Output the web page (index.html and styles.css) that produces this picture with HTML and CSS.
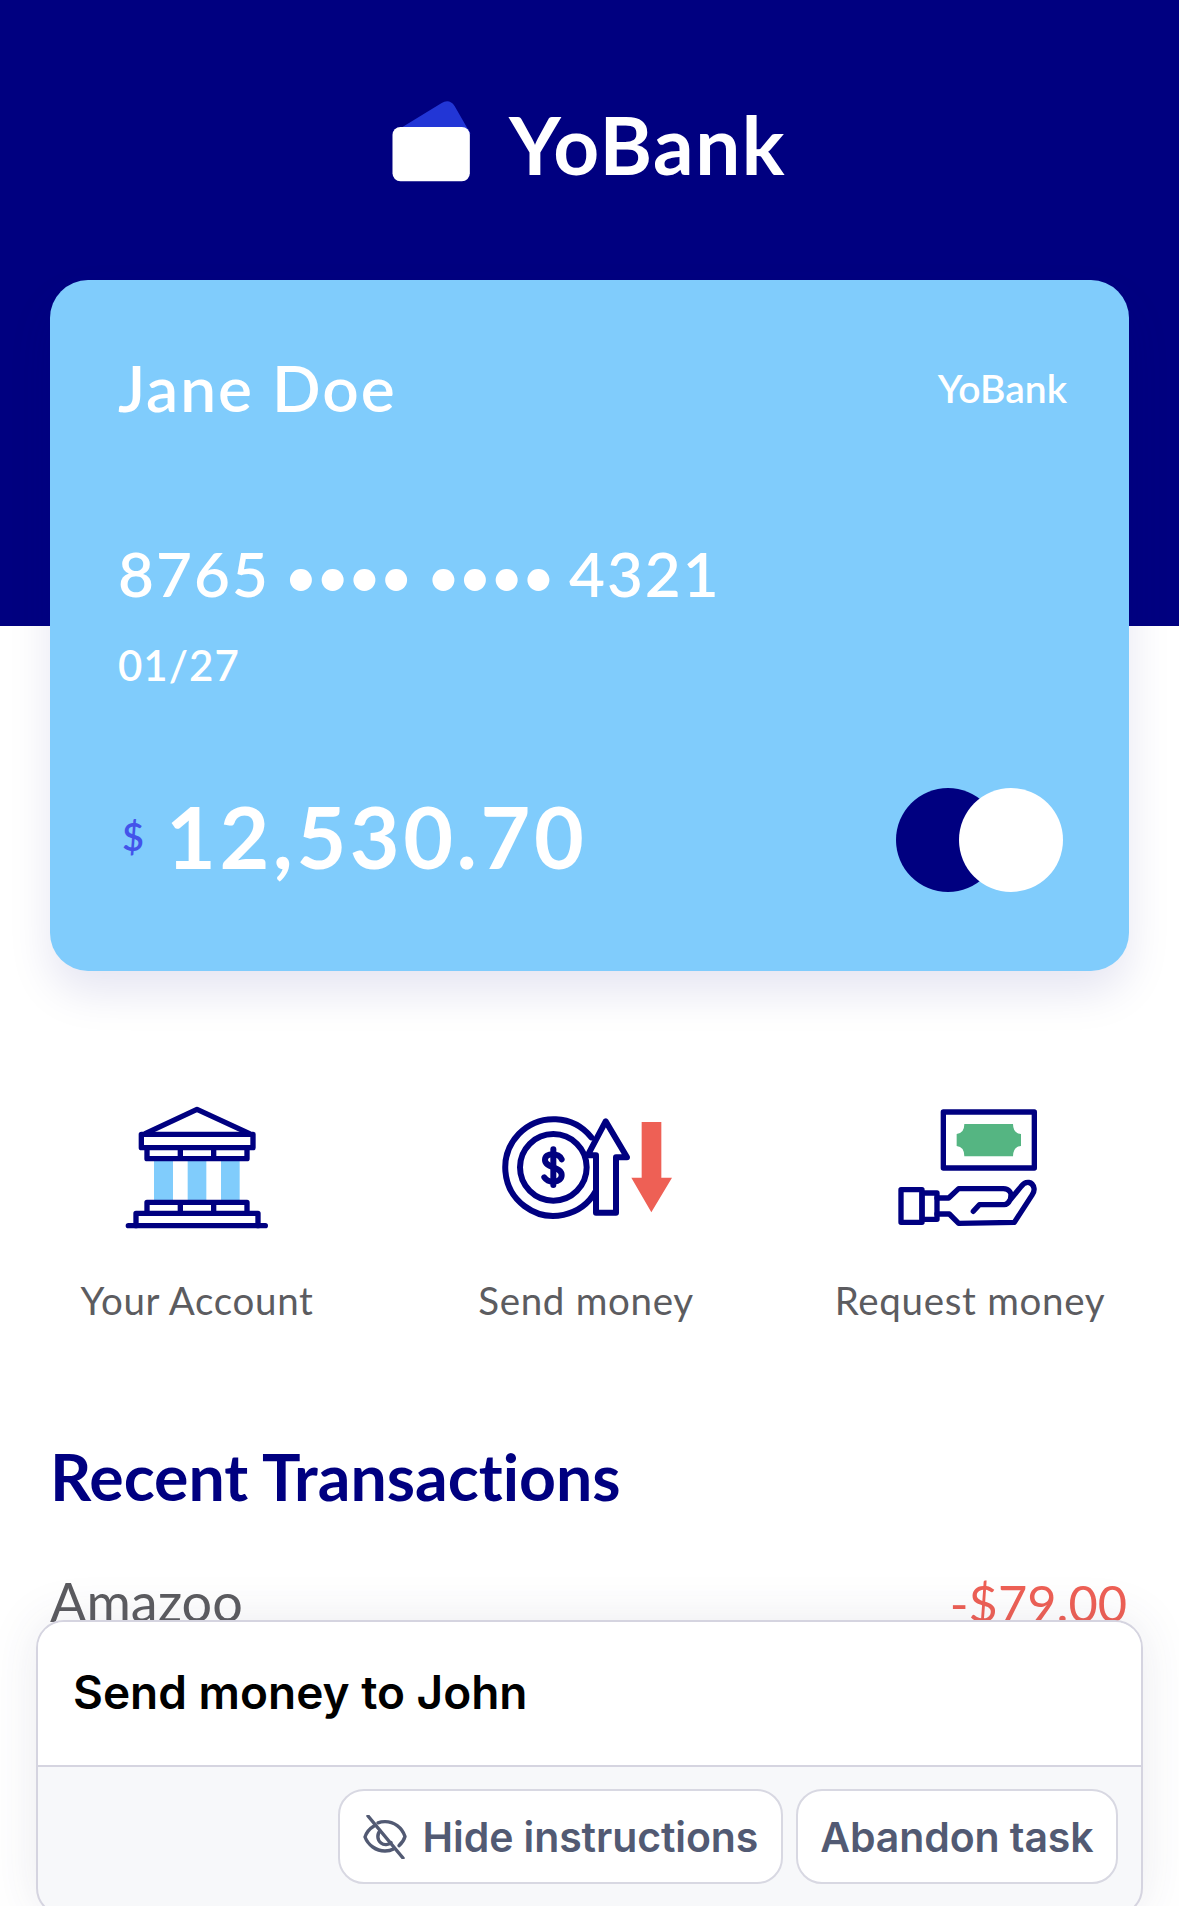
FILE: index.html
```html
<!DOCTYPE html>
<html lang="en">
<head>
    <meta charset="UTF-8">
    <meta name="viewport" content="width=device-width, initial-scale=1.0">
    <title>YoBank</title>
    <link rel="stylesheet" href="styles.css">
</head>
<body>

<div class="page">
    <!-- Header -->
    <header class="header">
        <svg class="logo-icon" viewBox="155 120 240 250">
            <path d="M178 208 L306 130 Q330 115 346 138 L394 222 Z" fill="#2236d6"/>
            <rect x="159" y="201" width="233" height="164" rx="24" fill="#fff"/>
        </svg>
        <span class="logo-text">YoBank</span>
    </header>

    <!-- Card -->
    <section class="card">
        <div class="card-top">
            <span class="card-name">Jane Doe</span>
            <span class="card-brand">YoBank</span>
        </div>
        <div class="card-number">8765 <span class="dots">••••</span> <span class="dots">••••</span> 4321</div>
        <div class="card-date">01/27</div>
        <div class="card-bottom">
            <div class="balance">
                <span class="currency">$</span>
                <span class="amount">12,530.70</span>
            </div>
            <div class="circles">
                <span class="circle circle-dark"></span>
                <span class="circle circle-light"></span>
            </div>
        </div>
    </section>

    <!-- Actions -->
    <section class="actions">
        <div class="action">
            <svg class="action-icon" viewBox="-41 0 720 510">
                <g fill="#80ccfc">
                    <rect x="190" y="240" width="57" height="122"/>
                    <rect x="291" y="240" width="56" height="122"/>
                    <rect x="391" y="240" width="56" height="122"/>
                </g>
                <g fill="none" stroke="#000080" stroke-width="16" stroke-linejoin="round" stroke-linecap="round">
                    <path d="M165 160 L319 88 L475 160"/>
                    <rect x="152" y="163" width="335" height="40"/>
                    <path d="M169 203 V236 H469 V203 M269 205 V236 M369 205 V236"/>
                    <path d="M169 398 V367 H469 V398 M269 367 V398 M369 367 V398"/>
                    <path d="M136 437 V400 H502 V437"/>
                    <path d="M113 437 H524"/>
                </g>
            </svg>
            <span class="action-label">Your Account</span>
        </div>
        <div class="action">
            <svg class="action-icon" viewBox="-40 0 720 510">
                <path d="M487 126 H546 V293 H578 L516 397 L456 293 H487 Z" fill="#ee6055"/>
                <g fill="none" stroke="#000080" stroke-width="18" stroke-linejoin="round" stroke-linecap="round">
                    <path d="M336 172 A145 145 0 1 0 349 334"/>
                    <circle cx="222" cy="262" r="100"/>
                    <path d="M350 228 V398 H410 V232 H443 L379 124 L325 226 H350"/>
                    <path d="M247 238 C240 218 197 216 197 240 C197 264 247 260 247 285 C247 310 207 310 195 292"/>
                    <path d="M222 208 V315"/>
                </g>
            </svg>
            <span class="action-label">Send money</span>
        </div>
        <div class="action">
            <svg class="action-icon" viewBox="-58 0 720 510">
                <path d="M285 132 H431 Q431 160 455 162 V198 Q431 200 431 229 H285 Q285 200 262 198 V162 Q285 160 285 132 Z" fill="#55b582"/>
                <g fill="none" stroke="#000080" stroke-width="16" stroke-linejoin="round" stroke-linecap="round">
                    <rect x="222" y="96" width="273" height="168"/>
                    <rect x="95" y="329" width="63" height="98"/>
                    <rect x="158" y="339" width="45" height="79"/>
                    <path d="M203 354 H238 L268 326 H402 C420 326 428 340 424 352"/>
                    <path d="M312 394 L330 374 H405 C415 374 418 368 422 360 L455 320 C470 300 490 305 494 325 C496 335 490 342 487 347 L435 427 L268 430 L240 402 H203"/>
                </g>
            </svg>
            <span class="action-label">Request money</span>
        </div>
    </section>

    <!-- Transactions -->
    <section class="transactions">
        <h2>Recent Transactions</h2>
        <div class="transaction">
            <span class="merchant">Amazoo</span>
            <span class="price">-$79.00</span>
        </div>
    </section>

    <!-- Task panel -->
    <div class="task-panel">
        <div class="task-title">Send money to John</div>
        <div class="task-buttons">
            <button class="task-button">
                <svg class="eye-icon" viewBox="0 0 44 44" fill="none" stroke="#525a73" stroke-width="3.4" stroke-linecap="round" stroke-linejoin="round">
                    <path d="M11 11 C6 14 3 19 2 22 C5 30 13 36 22 36 C25 36 28 35.4 30.5 34"/>
                    <path d="M15 7.8 C17 7 19.5 6.6 22 6.6 C31 6.6 39 12.5 42 21.5 C41 25 38.6 28.4 36 30.6"/>
                    <path d="M17 16 C14 19 14 25 18 28 C21 30.5 25.5 30 28 27.5"/>
                    <path d="M5 1 L40 43"/>
                </svg>
                Hide instructions
            </button>
            <button class="task-button">Abandon task</button>
        </div>
    </div>
</div>

</body>
</html>
```

FILE: styles.css
```css
html, body {
    margin: 0;
    padding: 0;
}
body {
    font-family: Lato, "Open Sans", sans-serif;
    font-variant-ligatures: none;
    background-color: #fff;
}
.page {
    position: relative;
    height: 1906px;
    overflow: hidden;
}
.header {
    height: 626px;
    box-sizing: border-box;
    padding: 100px 2px 0 0;
    background-color: #000080;
    display: flex;
    justify-content: center;
    align-items: flex-start;
    gap: 38px;
}
.logo-icon {
    width: 80px;
    height: 83px;
}
.logo-text {
    color: #fff;
    font-size: 80px;
    font-weight: 700;
    line-height: 88px;
    letter-spacing: 1.5px;
}
.card {
    margin: -346px 50px 0;
    height: 691px;
    box-sizing: border-box;
    padding: 69px 62px 0 68px;
    background-color: #80ccfc;
    border-radius: 38px;
    box-shadow: 0 22px 44px rgba(0, 0, 128, 0.1);
    color: #fff;
    position: relative;
}
.card-top {
    display: flex;
    justify-content: space-between;
    align-items: center;
}
.card-name {
    font-size: 64px;
    font-weight: 600;
    line-height: 78px;
    letter-spacing: 2px;
}
.card-brand {
    font-size: 39px;
    font-weight: 600;
}
.card-number {
    margin-top: 108px;
    font-size: 62px;
    font-weight: 600;
    line-height: 76px;
    letter-spacing: 2px;
}
.dots {
    margin-left: -2px;
    font-size: 54px;
    letter-spacing: 0.4px;
}
.dots:last-of-type {
    margin-right: -3px;
}
.card-date {
    margin-top: 25px;
    font-size: 42px;
    font-weight: 600;
    line-height: 50px;
    letter-spacing: 1px;
}
.card-bottom {
    margin-top: 98px;
    display: flex;
    justify-content: space-between;
    align-items: center;
    margin-right: 4px;
}
.balance {
    display: flex;
    align-items: center;
    gap: 22px;
    margin-top: -9px;
}
.currency {
    margin-left: 4px;
    font-size: 38px;
    font-weight: 600;
    color: #4353ea;
}
.amount {
    font-size: 86px;
    font-weight: 700;
    line-height: 104px;
    letter-spacing: 3.5px;
}
.circles {
    display: flex;
}
.circle {
    width: 104px;
    height: 104px;
    border-radius: 50%;
}
.circle-dark {
    background-color: #000080;
}
.circle-light {
    background-color: #fff;
    margin-left: -41px;
}
.actions {
    margin-top: 109px;
    padding: 0 12px;
    display: grid;
    grid-template-columns: 370px 408px 360px;
}
.action {
    display: flex;
    flex-direction: column;
    align-items: center;
}
.action-icon {
    width: 240px;
    height: 170px;
}
.action-label {
    margin-top: 27px;
    font-size: 38.5px;
    line-height: 46px;
    color: #5c5c60;
    letter-spacing: 0.7px;
}
.transactions {
    padding: 0 52px 0 50px;
}
.transactions h2 {
    margin: 114px 0 0;
    font-size: 64.4px;
    font-weight: 700;
    line-height: 78px;
    color: #000080;
}
.transaction {
    margin-top: 55px;
    display: flex;
    justify-content: space-between;
    align-items: baseline;
    font-size: 54px;
    line-height: 64px;
}
.merchant {
    color: #5c5c60;
}
.price {
    color: #ee6055;
    font-size: 50.5px;
}
.task-panel {
    position: absolute;
    left: 36px;
    right: 36px;
    top: 1620px;
    height: 296px;
    box-sizing: border-box;
    border: 2px solid #d5d4e0;
    border-radius: 28px;
    background-color: #f7f8fa;
    box-shadow: 0 0 50px rgba(60, 60, 100, 0.1);
    font-family: Inter, sans-serif;
    overflow: hidden;
}
.task-title {
    height: 145px;
    box-sizing: border-box;
    padding: 0 35px 4px;
    display: flex;
    align-items: center;
    background-color: #fff;
    border-bottom: 2px solid #d5d4e0;
    color: #000;
    font-size: 46px;
    font-weight: 600;
}
.task-buttons {
    padding: 22px 23px 0;
    display: flex;
    justify-content: flex-end;
    gap: 13px;
}
.task-button {
    height: 95px;
    box-sizing: border-box;
    padding: 0 22.5px;
    display: flex;
    align-items: center;
    gap: 16px;
    background-color: #fff;
    border: 2px solid #d8d8e2;
    border-radius: 26px;
    color: #525a73;
    font-family: Inter, sans-serif;
    font-size: 41px;
    font-weight: 600;
    letter-spacing: -0.1px;
}
.eye-icon {
    width: 44px;
    height: 44px;
}
```
